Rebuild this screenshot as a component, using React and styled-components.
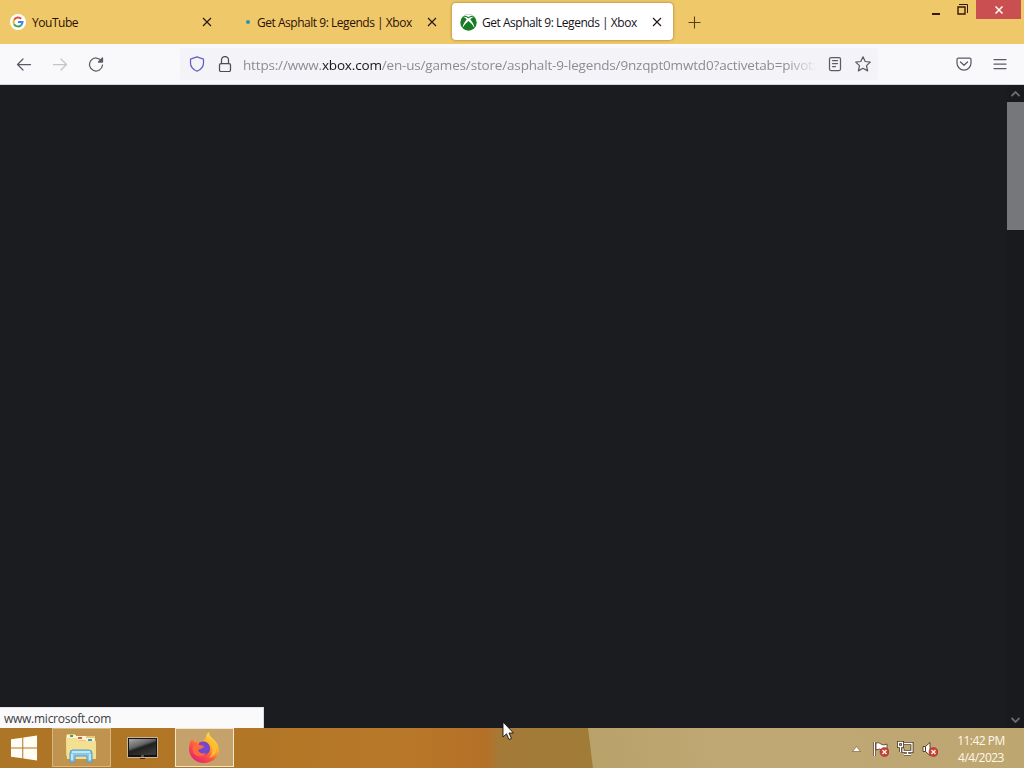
import React from "react";
import styled, { createGlobalStyle, css } from "styled-components";

const GlobalStyle = createGlobalStyle`
  * {
    box-sizing: border-box;
  }

  body {
    margin: 0;
    overflow: hidden;
    font-family: "Open Sans", "Noto Sans", sans-serif;
  }

  svg {
    display: block;
    flex-shrink: 0;
  }
`;

const Screen = styled.div`
  position: relative;
  width: 1024px;
  height: 768px;
  display: flex;
  flex-direction: column;
  overflow: hidden;
`;

const TabStrip = styled.div`
  height: 44px;
  display: flex;
  align-items: flex-start;
  background: #efc869;
`;

const Tab = styled.div`
  width: ${({ $width }) => $width}px;
  height: 37px;
  margin: 3px 3px 0 0;
  padding: 1px 11px 0 9px;
  display: flex;
  align-items: center;
  border-radius: 4px;
  color: #2b1008;
  ${({ $active }) =>
    $active &&
    css`
      margin-left: 1px;
      padding-left: 8px;
      background: #fff;
      color: #15141a;
      box-shadow: 0 0 3px rgba(110, 75, 10, 0.65);
    `}
`;

const TabIcon = styled.div`
  width: 17px;
  margin-right: ${({ $gap }) => $gap || 5}px;
  display: flex;
  justify-content: center;
`;

const LoadingDot = styled.div`
  width: 4px;
  height: 4px;
  margin-left: 9px;
  border-radius: 50%;
  background: #2795b4;
`;

const TabTitle = styled.div`
  flex: 1;
  padding-top: 2px;
  font-size: 12px;
  line-height: 18px;
  letter-spacing: -0.47px;
  white-space: nowrap;
`;

const NewTab = styled.div`
  padding: 16px 0 0 12px;
`;

const WindowControls = styled.div`
  margin-left: auto;
  display: flex;
`;

const WindowButton = styled.div`
  width: 26px;
  height: 19px;
  display: flex;
  align-items: center;
  justify-content: center;
`;

const CloseButton = styled(WindowButton)`
  width: 45px;
  margin: 0 3px 0 1px;
  background: #c94f50;
`;

const Toolbar = styled.div`
  height: 41px;
  display: flex;
  align-items: center;
  background: #f9f9fb;
  border-bottom: 1px solid #d5d5d8;
`;

const NavButtons = styled.div`
  width: 180px;
  padding-left: 16px;
  display: flex;
  gap: 20px;
`;

const AddressBar = styled.div`
  width: 698px;
  height: 32px;
  padding: 0 7px 0 9px;
  display: flex;
  align-items: center;
  gap: 12px;
  background: #f4f4f8;
  border-radius: 4px;
`;

const Url = styled.div`
  width: 574px;
  margin: 2px -2px 0 -2px;
  white-space: nowrap;
  font-size: 13.5px;
  line-height: 20px;
  letter-spacing: -0.17px;
  color: #8d8c93;
  mask-image: linear-gradient(to left, transparent, #000 32px);

  b {
    font-weight: 400;
    color: #15141a;
  }
`;

const ToolbarEnd = styled.div`
  margin-left: auto;
  padding-right: 16px;
  display: flex;
  gap: 20px;
`;

const Content = styled.div`
  height: 643px;
  display: flex;
  align-items: flex-end;
  background: #1b1c1f;
`;

const StatusPanel = styled.div`
  width: 264px;
  height: 21px;
  padding: 2px 4px 0;
  border-top: 1px solid #e4e4e6;
  border-right: 1px solid #d9d9dc;
  background: #fafafb;
  color: #3d3d42;
  font-size: 12px;
  line-height: 18px;
  letter-spacing: -0.26px;
`;

const Scrollbar = styled.div`
  width: 17px;
  height: 100%;
  margin-left: auto;
  display: flex;
  flex-direction: column;
  align-items: center;
  justify-content: space-between;
  background: #191a1d;
`;

const ScrollTop = styled.div`
  width: 17px;
  display: flex;
  flex-direction: column;
  align-items: center;
`;

const ScrollArrow = styled.div`
  height: 17px;
  display: flex;
  align-items: center;
`;

const ScrollThumb = styled.div`
  width: 17px;
  height: 128px;
  background: #76777a;
`;

const Taskbar = styled.div`
  height: 40px;
  display: flex;
  background:
    linear-gradient(
      83deg,
      transparent 588px,
      #b9a16a 589px,
      #c0a875 720px,
      #bea671 1030px
    ),
    linear-gradient(
      90deg,
      #ad7526 0,
      #b27726 270px,
      #b87829 400px,
      #b57027 485px,
      #a47a38 500px,
      #a07c38 600px
    );
`;

const StartButton = styled.div`
  width: 52px;
  padding: 7px 0 0 11px;
`;

const TaskButton = styled.div`
  width: 59px;
  height: 39px;
  margin-right: ${({ $gap }) => $gap || 0}px;
  padding-right: 1px;
  display: flex;
  align-items: center;
  justify-content: center;
  border: 1px solid transparent;
  ${({ $open }) =>
    $open &&
    css`
      background: #c0944e;
      border-color: #d6b783;
    `}
  ${({ $focused }) =>
    $focused &&
    css`
      background: #c5a26b;
      border-color: #f2e5cb;
    `}
`;

const Tray = styled.div`
  margin-left: auto;
  padding: 2px 18px 0 0;
  display: flex;
  align-items: center;
`;

const TrayIcons = styled.div`
  display: flex;
  align-items: center;
  gap: 8px;
`;

const TrayArrow = styled.svg`
  margin-right: 4px;
`;

const Clock = styled.div`
  width: 50px;
  margin-left: 18px;
  color: #fff8e9;
  font-size: 12px;
  line-height: 17px;
  letter-spacing: -0.5px;
  text-align: center;
  white-space: nowrap;
`;

const Cursor = styled.svg`
  position: absolute;
  left: 502px;
  top: 721px;
`;

const Glyph = ({ size = 16, color = "#5b5b66", children }) => (
  <svg
    width={size}
    height={size}
    viewBox="0 0 16 16"
    fill="none"
    stroke={color}
    strokeWidth="1.25"
    strokeLinecap="round"
    strokeLinejoin="round"
  >
    {children}
  </svg>
);

const TabClose = () => (
  <svg width="10" height="10" viewBox="0 0 10 10" stroke="#24130f" strokeWidth="1.1">
    <path d="M1 1l8 8M9 1L1 9" />
  </svg>
);

const GoogleLogo = () => (
  <svg width="16" height="16" viewBox="0 0 16 16" fill="none" strokeWidth="2">
    <circle cx="8" cy="8" r="8" fill="#fff" />
    <path d="M4.1 5.8A4.5 4.5 0 0 1 11.2 4.8" stroke="#e34c3f" />
    <path d="M4.1 10.2a4.5 4.5 0 0 1 0-4.4" stroke="#f0b52c" />
    <path d="M10.9 11.4a4.5 4.5 0 0 1-6.8-1.2" stroke="#36a455" />
    <path d="M8 8h4.5a4.5 4.5 0 0 1-1.6 3.4" stroke="#4383e8" />
  </svg>
);

const XboxLogo = () => (
  <svg width="17" height="17" viewBox="0 0 17 17">
    <circle cx="8.5" cy="8.5" r="8.2" fill="#187b25" />
    <path
      d="M3.8 1.8C5.500 1.300 7.200 2.200 8.500 3c1.300-.8 3-1.700 4.700-1.200L11.500.8Q8.500-.3 5.500.8z"
      fill="#fff"
    />
    <path
      d="M3 3C4.500 3.200 5.600 4.200 6.700 5.500 4.500 8 2.500 11.200 2.600 14.100 4 11 6.300 8.600 8.500 6.900c2.200 1.700 4.500 4.100 5.900 7.200.1-2.900-1.900-6.100-4.100-8.600C11.400 4.200 12.500 3.200 14 3 12 2.200 10 3.300 8.500 4.500 7 3.300 5 2.200 3 3z"
      fill="#fff"
    />
  </svg>
);

const WindowsLogo = () => (
  <svg width="27" height="26" viewBox="0 0 28 26" fill="#fffdf4">
    <path d="M0 4l11.700-1.700v10.200H0zM12.700 2.100L27 0v12.500H12.700zM0 13.500h11.700v10.200L0 22zM12.700 13.500H27V26l-14.300-2.100z" />
  </svg>
);

const FolderIcon = () => (
  <svg width="32" height="32" viewBox="0 0 32 32">
    <path d="M1 4l1-2h8l1 2h19v20H1z" fill="#e6ca70" />
    <path d="M2 3h9v4H2z" fill="#f8f1d8" />
    <path d="M5 3h3v2H5z" fill="#39a36d" />
    <path d="M11 4h10v4H11z" fill="#fff3d3" />
    <path d="M13 5h4v2h-4z" fill="#d45d43" />
    <path d="M21 6h9v4h-9z" fill="#f8f1d8" />
    <path d="M23 7h4v2h-4z" fill="#4c94bd" />
    <path d="M1 6h11l2 3h17v18H2z" fill="#f3df91" />
    <path d="M2 10h28v15H2z" fill="#f4e092" />
    <path d="M5 30v-9q0-3 3-3h16q3 0 3 3v9h-5v-6H10v6z" fill="#8cc8e6" stroke="#4d9dcc" />
    <path d="M7 20h18M7 28v-6M25 28v-6" stroke="#d6f0f8" strokeWidth="1.500" />
  </svg>
);

const MonitorIcon = () => (
  <svg width="31" height="24" viewBox="0 0 31 24">
    <defs>
      <linearGradient id="glass" x1="0" y1="0" x2="0.600" y2="1">
        <stop offset="0" stopColor="#aaa" />
        <stop offset="0.450" stopColor="#666" />
        <stop offset="0.600" stopColor="#202020" />
        <stop offset="1" stopColor="#383838" />
      </linearGradient>
    </defs>
    <path d="M.5 1.500h30v20H.5z" fill="#17120f" stroke="#c5b7a2" />
    <path d="M2 3h27v16H2z" fill="url(#glass)" />
    <path d="M13 22h5v1h-5z" fill="#332318" />
    <path d="M14 20h3" stroke="#d98951" />
  </svg>
);

const FirefoxIcon = () => (
  <svg width="32" height="32" viewBox="0 0 32 32">
    <defs>
      <linearGradient id="flame" x1="0.850" y1="0.100" x2="0.250" y2="0.950">
        <stop offset="0" stopColor="#ffe14a" />
        <stop offset="0.350" stopColor="#ffae27" />
        <stop offset="0.650" stopColor="#ff5540" />
        <stop offset="1" stopColor="#e72470" />
      </linearGradient>
      <radialGradient id="globe">
        <stop offset="0" stopColor="#6551dc" />
        <stop offset="1" stopColor="#8141bd" />
      </radialGradient>
    </defs>
    <path
      d="M4 7c1 1 2 2 3 3 2-1 4-1 6 0 2-1 4-2 5-5 0-2 1-4 3-5 0 5 5 7 7 10 2 3 3 6 3 9-1 7-7 12-15 12S1 25 1 17c0-4 1-7 3-10z"
      fill="url(#flame)"
    />
    <path d="M11 11c4-3 10-1 11 4 1 6-4 9-9 8-4-1-6-5-4-7 2 0 4 0 6-2l-4-1z" fill="url(#globe)" />
    <path d="M4 10c4 0 5 1 7 3l5 1c-1 3-4 3-6 4 1 3 4 4 8 3-3 5-11 4-13-1-1-4 0-7 2-9z" fill="#ff693e" />
    <path d="M22 11c4 5 3 11-1 15 8-2 9-10 5-15l-5-5z" fill="#ffbd35" />
  </svg>
);

const ErrorBadge = () => (
  <g>
    <circle cx="11.500" cy="11" r="4.500" fill="#cf3e35" stroke="#8d2821" strokeWidth=".5" />
    <path d="M9.500 9l4 4M13.500 9l-4 4" stroke="#fff" strokeWidth="1.300" />
  </g>
);

const trayIcons = [
  <svg key="flag" width="16" height="16" viewBox="0 0 16 16">
    <path d="M1.500 1v14" stroke="#51351b" strokeWidth="3" />
    <path d="M1.500 1v14" stroke="#fff" strokeWidth="1.500" />
    <path d="M3 2q3-1 5 1t6 0v7q-3 1-5-1t-6 0z" fill="#fff" stroke="#51351b" strokeWidth=".8" />
    <ErrorBadge />
  </svg>,
  <svg key="network" width="17" height="16" viewBox="0 0 17 16" fill="none">
    <path d="M7 2.500h8v8H6v-3M10.500 10.500v3M7 13.500h7M1.500 1.500h4v4h-4zM3.500 6v5" stroke="#4b351e" strokeWidth="3" />
    <path d="M7 2.500h8v8H6v-3M10.500 10.500v3M7 13.500h7M1.500 1.500h4v4h-4zM3.500 6v5" stroke="#fff" strokeWidth="1.300" />
  </svg>,
  <svg key="sound" width="16" height="16" viewBox="0 0 16 16">
    <path d="M1 5.500h2.500L8 1.500v13l-4.500-4H1z" fill="#fff" stroke="#51351b" strokeWidth=".9" />
    <path d="M3.500 5.500v5" stroke="#51351b" />
    <ErrorBadge />
  </svg>,
];

const Browser = () => (
  <>
    <TabStrip>
      <Tab $width={223}>
        <TabIcon $gap={6}>
          <GoogleLogo />
        </TabIcon>
        <TabTitle>YouTube</TabTitle>
        <TabClose />
      </Tab>
      <Tab $width={222}>
        <TabIcon>
          <LoadingDot />
        </TabIcon>
        <TabTitle>Get Asphalt 9: Legends | Xbox</TabTitle>
        <TabClose />
      </Tab>
      <Tab $width={221} $active>
        <TabIcon>
          <XboxLogo />
        </TabIcon>
        <TabTitle>Get Asphalt 9: Legends | Xbox</TabTitle>
        <TabClose />
      </Tab>
      <NewTab>
        <svg width="13" height="13" viewBox="0 0 13 13" stroke="#5d3d20" strokeWidth="1.100">
          <path d="M6.500.5v12M.5 6.500h12" />
        </svg>
      </NewTab>
      <WindowControls>
        <WindowButton>
          <svg width="10" height="12" viewBox="0 0 10 12">
            <path d="M1 9h8v2H1z" fill="#38170b" />
          </svg>
        </WindowButton>
        <WindowButton>
          <svg width="11" height="11" viewBox="0 0 11 11" fill="none" stroke="#38170b">
            <path d="M2 .5h8.500V9" />
            <path d="M1 3h7v7H1z" strokeWidth="1.400" />
          </svg>
        </WindowButton>
        <CloseButton>
          <svg width="8" height="8" viewBox="0 0 8 8" stroke="#fff" strokeWidth="1.500">
            <path d="M.5.5l7 7M7.500.5l-7 7" />
          </svg>
        </CloseButton>
      </WindowControls>
    </TabStrip>
    <Toolbar>
      <NavButtons>
        <Glyph>
          <path d="M1.500 8.500h13M7 3L1.500 8.500 7 14" />
        </Glyph>
        <Glyph color="#c3c3ca">
          <path d="M1.500 8.500h13M9 3l5.500 5.500L9 14" />
        </Glyph>
        <Glyph>
          <path d="M13.500 5A6.500 6.500 0 1 0 14.500 9" />
          <path d="M14.500 2v4H10.500z" fill="#5b5b66" />
        </Glyph>
      </NavButtons>
      <AddressBar>
        <Glyph color="#625fc0">
          <path d="M8 .8l6.500 2.400V7c0 4-3 6.800-6.500 8.300C4.500 13.800 1.500 11 1.500 7V3.200z" />
        </Glyph>
        <Glyph color="#4e4d55">
          <rect x="2.500" y="7.500" width="11" height="8" rx="1.500" />
          <path d="M4.500 7.500V4a3.500 3.500 0 0 1 7 0v3.500" />
        </Glyph>
        <Url>
          https://www.<b>xbox.com</b>/en-us/games/store/asphalt-9-legends/9nzqpt0mwtd0?activetab=pivot:
        </Url>
        <Glyph>
          <rect x="2.500" y="1.500" width="11" height="13" rx="1.500" />
          <path d="M5.500 4.500h5M5.500 7.500h5M5.500 10.500h3" />
        </Glyph>
        <Glyph>
          <path d="M8 .8l2.200 4.700 5.100.6-3.800 3.500 1.100 5.300L8 12.300l-4.600 2.600 1.100-5.300L.7 6.100l5.100-.6z" />
        </Glyph>
      </AddressBar>
      <ToolbarEnd>
        <Glyph>
          <path d="M2.500 2h11q1.500 0 1.500 1.500V7A7 7 0 0 1 1 7V3.500Q1 2 2.500 2zM4.500 6L8 9.300 11.500 6" />
        </Glyph>
        <Glyph>
          <path d="M2 3.500h12M2 8h12M2 12.500h12" />
        </Glyph>
      </ToolbarEnd>
    </Toolbar>
    <Content>
      <StatusPanel>www.microsoft.com</StatusPanel>
      <Scrollbar>
        <ScrollTop>
          <ScrollArrow>
            <svg width="9" height="6" viewBox="0 0 9 6" fill="none" stroke="#6c6c70" strokeWidth="1.800">
              <path d="M.5 5l4-4 4 4" />
            </svg>
          </ScrollArrow>
          <ScrollThumb />
        </ScrollTop>
        <ScrollArrow>
          <svg width="9" height="6" viewBox="0 0 9 6" fill="none" stroke="#6c6c70" strokeWidth="1.800">
            <path d="M.5 1l4 4 4-4" />
          </svg>
        </ScrollArrow>
      </Scrollbar>
    </Content>
  </>
);

const App = () => {
  return (
    <Screen>
      <GlobalStyle />
      <Browser />
      <Taskbar>
        <StartButton>
          <WindowsLogo />
        </StartButton>
        <TaskButton $open $gap={2}>
          <FolderIcon />
        </TaskButton>
        <TaskButton $gap={3}>
          <MonitorIcon />
        </TaskButton>
        <TaskButton $open $focused>
          <FirefoxIcon />
        </TaskButton>
        <Tray>
          <TrayIcons>
            <TrayArrow width="9" height="6" viewBox="0 0 9 6">
              <path d="M.5 5.500l4-5 4 5z" fill="#fff" stroke="#6d512c" strokeWidth=".6" />
            </TrayArrow>
            {trayIcons}
          </TrayIcons>
          <Clock>
            11:42 PM
            <br />
            4/4/2023
          </Clock>
        </Tray>
      </Taskbar>
      <Cursor width="12" height="20" viewBox="0 0 12 20">
        <path
          d="M1 1v15l3.500-3.200L7 18.500l2.500-1.100L7 12h4.500z"
          fill="#fff"
          stroke="#17120f"
          strokeWidth=".9"
        />
      </Cursor>
    </Screen>
  );
};

export default App;
